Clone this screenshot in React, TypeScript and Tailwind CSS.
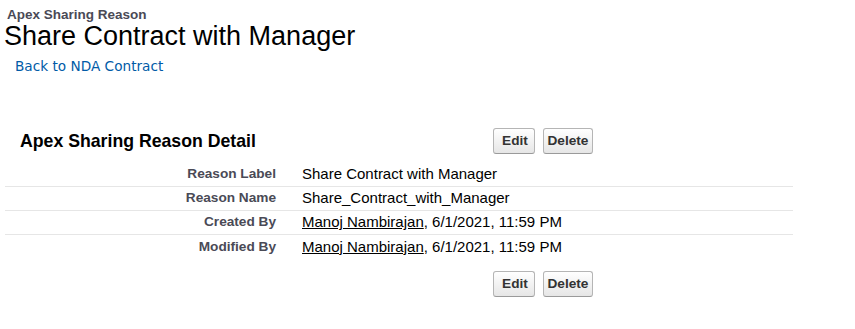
import React from "react";

interface DetailRow {
  label: string;
  value: string;
  user?: string; // linked user name shown before the value
}

const rows: DetailRow[] = [
  { label: "Reason Label", value: "Share Contract with Manager" },
  { label: "Reason Name", value: "Share_Contract_with_Manager" },
  { label: "Created By", user: "Manoj Nambirajan", value: ", 6/1/2021, 11:59 PM" },
  { label: "Modified By", user: "Manoj Nambirajan", value: ", 6/1/2021, 11:59 PM" },
];

const ButtonBar: React.FC = () => (
  <div className="flex gap-[8px]">
    <button className="w-[42px] h-[26px] pl-[2px] rounded-[3px] border border-[#b5b5b5] border-b-[#9a9a9a] bg-gradient-to-b from-white to-[#e6e6e6] text-[13.65px] font-bold text-[#333]">
      Edit
    </button>
    <button className="w-[50px] h-[26px] rounded-[3px] border border-[#b5b5b5] border-b-[#9a9a9a] bg-gradient-to-b from-white to-[#e6e6e6] text-[13.65px] font-bold text-[#333]">
      Delete
    </button>
  </div>
);

const App: React.FC = () => {
  return (
    <div className="w-[855px] h-[329px] bg-white font-['Liberation_Sans',Arial,sans-serif] text-black">
      {/* Page header */}
      <div className="pt-[7px] pl-[7px] text-[13.5px] leading-[15px] font-bold text-[#4a4a56]">
        Apex Sharing Reason
      </div>
      <h1 className="pl-[4px] text-[27px] leading-[29px] font-normal">Share Contract with Manager</h1>
      <div className="mt-[7px] pl-[15px] text-[13.65px] leading-[16px] font-['DejaVu_Sans',Verdana,sans-serif]">
        <a href="#" className="text-[#015ba7]">
          Back to NDA Contract
        </a>
      </div>

      {/* Detail block */}
      <div className="mt-[54px] ml-[5px] w-[788px]">
        <div className="flex items-center h-[26px]">
          <h2 className="w-[488px] pl-[15px] text-[17.7px] font-bold">Apex Sharing Reason Detail</h2>
          <ButtonBar />
        </div>

        <div className="mt-[9px]">
          {rows.map((row, i) => (
            <div
              key={row.label}
              className={`flex items-center h-[24px] ${i < rows.length - 1 ? "border-b border-[#e6e6e6]" : ""}`}
            >
              <div className="w-[271px] text-right text-[13.65px] font-bold text-[#4a4a56]">{row.label}</div>
              <div className="ml-[26px] text-[15px]">
                {row.user && (
                  <a href="#" className="underline text-black">
                    {row.user}
                  </a>
                )}
                {row.value}
              </div>
            </div>
          ))}
        </div>

        <div className="flex mt-[12px]">
          <div className="w-[488px]" />
          <ButtonBar />
        </div>
      </div>
    </div>
  );
};

export default App;
